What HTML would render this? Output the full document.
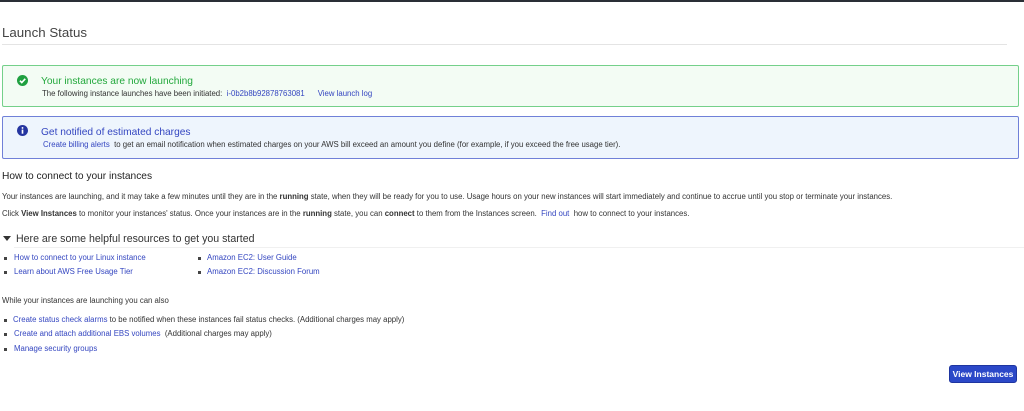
<!DOCTYPE html>
<html><head><style>
body{margin:0;width:1024px;height:411px;background:#fff;font-family:"Liberation Sans",sans-serif;position:relative;overflow:hidden;color:#333}
.a{position:absolute;white-space:nowrap}
a{color:#3446c0;text-decoration:none}
.s{font-size:7.8px}
.b{width:3px;height:3px;background:#444;position:absolute}
</style></head><body>
<div class="a" style="left:0;top:0;width:1024px;height:2px;background:#2a2f36"></div>
<div class="a" style="left:2px;top:25px;font-size:13.3px;color:#444">Launch Status</div>
<div class="a" style="left:2px;top:44px;width:1005px;height:1px;background:#e4e4e4"></div>

<div class="a" style="left:2px;top:65px;width:1015px;height:40px;border:1px solid #74d08a;background:#f3fcf4;border-radius:2px"></div>
<svg class="a" style="left:17px;top:75px" width="11" height="11" viewBox="0 0 12 12"><circle cx="6" cy="6" r="6" fill="#1fa040"/><path d="M3.2 6.2l2 2 3.8-4" stroke="#fff" stroke-width="1.8" fill="none"/></svg>
<div class="a" style="left:41px;top:76px;font-size:10.2px;color:#22a83c">Your instances are now launching</div>
<div class="a s" style="left:42px;top:89px">The following instance launches have been initiated: &nbsp;<a>i-0b2b8b92878763081</a> &nbsp; &nbsp; &nbsp;<a>View launch log</a></div>

<div class="a" style="left:2px;top:116px;width:1015px;height:41px;border:1px solid #7080d8;background:#eef5fd;border-radius:2px"></div>
<svg class="a" style="left:17px;top:125px" width="11" height="11" viewBox="0 0 12 12"><circle cx="6" cy="6" r="6" fill="#2535a0"/><rect x="5.1" y="5" width="1.8" height="4.5" fill="#fff"/><circle cx="6" cy="3.2" r="1" fill="#fff"/></svg>
<div class="a" style="left:41px;top:127px;font-size:10.2px;color:#3446c0">Get notified of estimated charges</div>
<div class="a s" style="left:43px;top:140px"><a>Create billing alerts</a>&nbsp; to get an email notification when estimated charges on your AWS bill exceed an amount you define (for example, if you exceed the free usage tier).</div>

<div class="a" style="left:2px;top:171px;font-size:10.2px;color:#222">How to connect to your instances</div>
<div class="a s" style="left:2px;top:192px">Your instances are launching, and it may take a few minutes until they are in the <b>running</b> state, when they will be ready for you to use. Usage hours on your new instances will start immediately and continue to accrue until you stop or terminate your instances.</div>
<div class="a s" style="left:2px;top:209px">Click <b>View Instances</b> to monitor your instances' status. Once your instances are in the <b>running</b> state, you can <b>connect</b> to them from the Instances screen. &nbsp;<a>Find out</a>&nbsp; how to connect to your instances.</div>

<svg class="a" style="left:3px;top:236px" width="8" height="6"><path d="M0 0h8L4 5z" fill="#333"/></svg>
<div class="a" style="left:16px;top:233px;font-size:10.6px;color:#333">Here are some helpful resources to get you started</div>
<div class="a" style="left:14px;top:247px;width:1010px;height:1px;background:#f0f0f0"></div>
<div class="b" style="left:4px;top:257px"></div><div class="a s" style="left:14px;top:253px"><a>How to connect to your Linux instance</a></div>
<div class="b" style="left:4px;top:271px"></div><div class="a s" style="left:14px;top:267px"><a>Learn about AWS Free Usage Tier</a></div>
<div class="b" style="left:198px;top:257px"></div><div class="a s" style="left:207px;top:253px"><a>Amazon EC2: User Guide</a></div>
<div class="b" style="left:198px;top:271px"></div><div class="a s" style="left:207px;top:267px"><a>Amazon EC2: Discussion Forum</a></div>

<div class="a s" style="left:2px;top:296px">While your instances are launching you can also</div>
<div class="b" style="left:4px;top:319px"></div><div class="a s" style="left:13px;top:315px"><a>Create status check alarms</a> to be notified when these instances fail status checks. (Additional charges may apply)</div>
<div class="b" style="left:4px;top:333px"></div><div class="a s" style="left:14px;top:329px"><a>Create and attach additional EBS volumes</a>&nbsp; (Additional charges may apply)</div>
<div class="b" style="left:4px;top:348px"></div><div class="a s" style="left:14px;top:344px"><a>Manage security groups</a></div>

<div class="a" style="left:949px;top:365px;width:68px;height:18px;background:#2b48c8;border:1px solid #1e35a0;border-radius:3px;box-sizing:border-box;color:#fff;font-size:8.5px;font-weight:bold;text-align:center;line-height:16px">View Instances</div>
</body></html>
